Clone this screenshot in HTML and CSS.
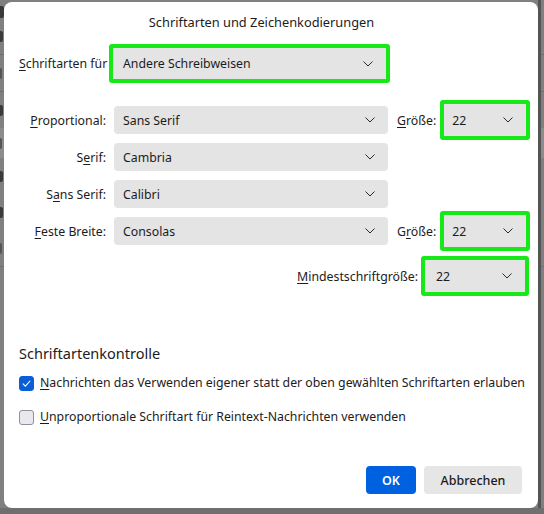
FILE: index.html
```html
<!DOCTYPE html>
<html lang="de">
<head>
<meta charset="utf-8">
<title>Schriftarten und Zeichenkodierungen</title>
<link rel="stylesheet" href="styles.css">
</head>
<body>
  <div class="backdrop">
    <div class="page">
      <i class="mark mark-top"></i>
      <div class="page-row"><i class="mark"></i></div>
      <div class="page-rule"></div>
      <div class="page-row"><i class="mark slim"></i></div>
      <div class="page-rule"></div>
      <div class="page-row"><i class="mark"></i></div>
      <div class="page-band"><i class="mark slim"></i></div>
      <div class="page-row"><i class="mark"></i></div>
      <div class="page-row"><i class="mark"></i></div>
      <div class="page-row"><i class="mark slim"></i></div>
      <div class="page-rule"></div>
    </div>
    <div class="edge"></div>
  </div>

  <div class="dialog" role="dialog" aria-labelledby="dlg-title">
    <h1 class="dialog-title" id="dlg-title">Schriftarten und Zeichenkodierungen</h1>

    <div class="lang-row">
      <label class="lang-label"><u>S</u>chriftarten für</label>
      <div class="hl">
        <div class="select select-lang">
          <span>Andere Schreibweisen</span>
          <svg class="chev" viewBox="0 0 10 6"><path d="M0.5 0.5 L5 5 L9.5 0.5"/></svg>
        </div>
      </div>
    </div>

    <div class="font-grid">
      <label class="flabel"><u>P</u>roportional:</label>
      <div class="select"><span>Sans Serif</span><svg class="chev" viewBox="0 0 10 6"><path d="M0.5 0.5 L5 5 L9.5 0.5"/></svg></div>
      <label class="slabel"><u>G</u>röße:</label>
      <div class="hl hl-size">
        <div class="select select-size"><span>22</span><svg class="chev" viewBox="0 0 10 6"><path d="M0.5 0.5 L5 5 L9.5 0.5"/></svg></div>
      </div>

      <label class="flabel">S<u>e</u>rif:</label>
      <div class="select"><span>Cambria</span><svg class="chev" viewBox="0 0 10 6"><path d="M0.5 0.5 L5 5 L9.5 0.5"/></svg></div>
      <span></span><span></span>

      <label class="flabel">S<u>a</u>ns Serif:</label>
      <div class="select"><span>Calibri</span><svg class="chev" viewBox="0 0 10 6"><path d="M0.5 0.5 L5 5 L9.5 0.5"/></svg></div>
      <span></span><span></span>

      <label class="flabel"><u>F</u>este Breite:</label>
      <div class="select"><span>Consolas</span><svg class="chev" viewBox="0 0 10 6"><path d="M0.5 0.5 L5 5 L9.5 0.5"/></svg></div>
      <label class="slabel">G<u>r</u>öße:</label>
      <div class="hl hl-size">
        <div class="select select-size"><span>22</span><svg class="chev" viewBox="0 0 10 6"><path d="M0.5 0.5 L5 5 L9.5 0.5"/></svg></div>
      </div>
    </div>

    <div class="min-row">
      <label class="slabel"><u>M</u>indestschriftgröße:</label>
      <div class="hl hl-min">
        <div class="select select-size"><span>22</span><svg class="chev" viewBox="0 0 10 6"><path d="M0.5 0.5 L5 5 L9.5 0.5"/></svg></div>
      </div>
    </div>

    <h2 class="section-title">Schriftartenkontrolle</h2>

    <label class="check-row first">
      <span class="box checked"><svg viewBox="0 0 16 16"><path d="M3.5 8.2 L6.6 11.3 L12.6 4.6"/></svg></span>
      <span><u>N</u>achrichten das Verwenden eigener statt der oben gewählten Schriftarten erlauben</span>
    </label>
    <label class="check-row second">
      <span class="box"></span>
      <span><u>U</u>nproportionale Schriftart für Reintext-Nachrichten verwenden</span>
    </label>

    <div class="buttons">
      <button class="btn btn-primary">OK</button>
      <button class="btn">Abbrechen</button>
    </div>
  </div>
</body>
</html>
```
FILE: styles.css
```css
html, body {
  margin: 0;
  padding: 0;
  width: 544px;
  height: 514px;
  overflow: hidden;
}

body {
  position: relative;
  background: #6f6f6f;
  font-family: "Noto Sans", "Open Sans", sans-serif;
  font-size: 12.3px;
  color: #1c1b22;
}

/* dimmed window behind the dialog */
.backdrop {
  position: absolute;
  inset: 0 0 6px 0;
  background: #808080;
}

.page-row {
  height: 36px;
  display: flex;
  align-items: center;
}

.page-rule {
  height: 1px;
  background: #707070;
}

.page-band {
  height: 30px;
  background: #8c8c8c;
  display: flex;
  align-items: center;
}

.mark {
  display: block;
  width: 3px;
  height: 11px;
  background: #3a3a3a;
  border-radius: 0 2px 2px 0;
}

.mark.slim {
  width: 2px;
  background: #555555;
}

.mark-top {
  margin-top: 6px;
  height: 12px;
  width: 4px;
}

.edge {
  position: absolute;
  top: 0;
  bottom: 0;
  right: 3px;
  width: 3px;
  background: #545454;
}

/* dialog */
.dialog {
  position: absolute;
  left: 4px;
  top: 2px;
  width: 534px;
  height: 506px;
  box-sizing: border-box;
  padding: 10px 16px 14px 15px;
  background: #ffffff;
  border-radius: 8px;
  display: flex;
  flex-direction: column;
}

.dialog-title {
  margin: 0 0 12px;
  padding-right: 18px;
  font-size: 12.8px;
  line-height: 20px;
  font-weight: 400;
  text-align: center;
}

u {
  text-decoration-thickness: 1px;
  text-underline-offset: 2px;
}

/* selects */
.select {
  box-sizing: border-box;
  height: 28px;
  background: #e4e4e4;
  border-radius: 4px;
  display: flex;
  align-items: center;
  justify-content: space-between;
  padding: 0 13px 0 9px;
}

.chev {
  width: 10px;
  height: 6px;
  flex: none;
}

.chev path {
  fill: none;
  stroke: #2b2b2b;
  stroke-width: 1;
}

.hl {
  box-sizing: border-box;
  border: 4px solid #17e817;
  border-radius: 3px;
  background: #e4e4e4;
}

.lang-row {
  display: flex;
  align-items: center;
  height: 39px;
}

.lang-label {
  width: 90px;
  white-space: nowrap;
}

.lang-row .hl {
  width: 281px;
  height: 39px;
}

.select-lang {
  height: 31px;
  padding: 0 13px 0 10px;
  border-radius: 0;
}

/* font grid */
.font-grid {
  margin-top: 23px;
  display: grid;
  grid-template-columns: 87px 274px auto 90px;
  grid-auto-rows: 28px;
  column-gap: 8px;
  row-gap: 9px;
  align-items: center;
}

.flabel {
  text-align: right;
  white-space: nowrap;
}

.slabel {
  margin-left: 1px;
  white-space: nowrap;
}

.hl-size {
  width: 90px;
  height: 40px;
  margin-left: -4px;
  align-self: center;
}

.select-size {
  height: 32px;
  border-radius: 0;
  padding: 0 13px 0 8px;
}

.min-row {
  margin-top: 11px;
  margin-right: -7px;
  display: flex;
  justify-content: flex-end;
  align-items: center;
  gap: 3px;
}

.hl-min {
  width: 108px;
  height: 40px;
}

.hl-min .select-size {
  padding-left: 11px;
}

.section-title {
  margin: 47px 0 0;
  font-size: 14.5px;
  line-height: 20px;
  font-weight: 400;
}

.check-row {
  display: flex;
  align-items: center;
  gap: 6px;
  line-height: 20px;
  white-space: nowrap;
}

.check-row.first { margin-top: 10px; }
.check-row.second { margin-top: 14px; }

.box {
  box-sizing: border-box;
  width: 15px;
  height: 15px;
  border-radius: 3px;
  border: 1px solid #8f8f9d;
  background: #e9e9ed;
  flex: none;
  display: flex;
}

.box.checked {
  background: #0a5fd6;
  border-color: #0a5fd6;
}

.box svg {
  width: 13px;
  height: 13px;
}

.box path {
  fill: none;
  stroke: #ffffff;
  stroke-width: 1.3;
}

.buttons {
  margin-top: auto;
  display: flex;
  justify-content: flex-end;
  gap: 8px;
}

.btn {
  box-sizing: border-box;
  height: 28px;
  width: 98px;
  border: none;
  border-radius: 4px;
  background: #e6e6e6;
  color: #1c1b22;
  font-family: inherit;
  font-size: 12.5px;
  font-weight: 500;
  padding: 0;
}

.btn-primary {
  width: 50px;
  background: #0061e0;
  color: #ffffff;
  font-weight: 600;
}
```
